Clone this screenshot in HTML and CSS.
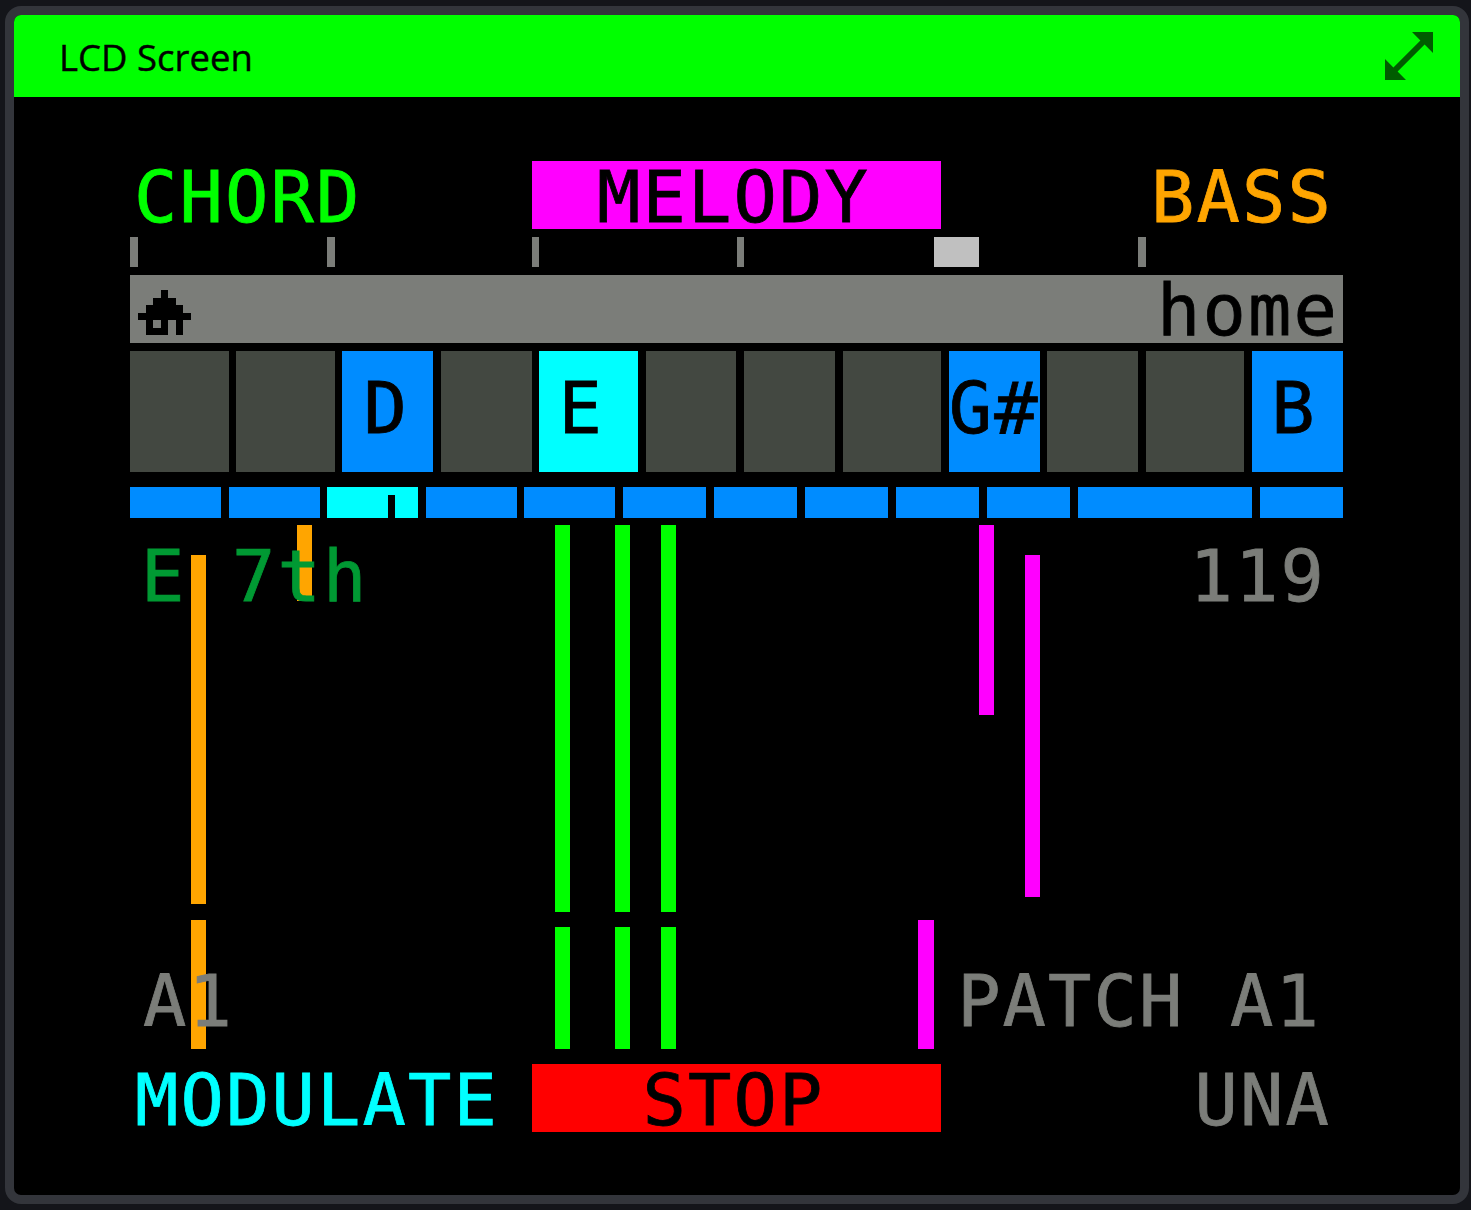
FILE: index.html
```html
<!DOCTYPE html>
<html lang="en">
  <head>
    <meta charset="UTF-8" />
    <meta name="viewport" content="width=device-width, initial-scale=1.0" />
    <title>LCD Screen</title>
    <link rel="stylesheet" href="styles.css">
  </head>
  <body>
    <div class="window">
      <div class="title-bar">
        <span class="title">LCD Screen</span>
        <svg class="expand" viewBox="0 0 48 48" width="48" height="48">
          <path d="M27 0 H48 V21 L39.6 12.6 L12.6 39.6 L21 48 H0 V27 L8.4 35.4 L35.4 8.4 z"></path>
        </svg>
      </div>
      <div class="screen">
        <div class="lcd">
          <div class="mode-row">
            <span class="lcd-text chord">CHORD</span>
            <span class="lcd-text mode-box melody">MELODY</span>
            <span class="lcd-text bass">BASS</span>
          </div>
          <div class="ruler">
            <i class="tick t1"></i>
            <i class="tick t2"></i>
            <i class="tick t3"></i>
            <i class="tick t4"></i>
            <i class="thumb"></i>
            <i class="tick t5"></i>
          </div>
          <div class="status">
            <svg class="home-icon" viewBox="0 0 7 6" shape-rendering="crispEdges">
              <path d="M3 0h1v1h-1z M2 1h3v1h-3z M1 2h5v1h-5z M0 3h7v1h-7z M1 4h1v1h-1z M3 4h1v1h-1z M5 4h1v2h-1z M1 5h3v1h-3z"></path>
            </svg>
            <span class="lcd-text home-label">home</span>
          </div>
          <div class="keys">
            <div class="key wide"></div>
            <div class="key wide"></div>
            <div class="key on note-d lcd-text">D</div>
            <div class="key"></div>
            <div class="key wide root lcd-text">E</div>
            <div class="key"></div>
            <div class="key"></div>
            <div class="key wide"></div>
            <div class="key on sharp lcd-text">G#</div>
            <div class="key"></div>
            <div class="key wide"></div>
            <div class="key on lcd-text">B</div>
          </div>
          <div class="segments">
            <div class="seg"></div>
            <div class="seg"></div>
            <div class="seg current"><i class="notch"></i></div>
            <div class="seg"></div>
            <div class="seg"></div>
            <div class="seg short"></div>
            <div class="seg short"></div>
            <div class="seg short"></div>
            <div class="seg short"></div>
            <div class="seg short"></div>
            <div class="seg long"></div>
            <div class="seg short"></div>
          </div>
          <div class="stage">
            <i class="note bass-note n1"></i>
            <i class="note bass-note n2"></i>
            <i class="note bass-note n3"></i>
            <i class="note chord-note n4"></i>
            <i class="note chord-note n5"></i>
            <i class="note chord-note n6"></i>
            <i class="note chord-note n7"></i>
            <i class="note chord-note n8"></i>
            <i class="note chord-note n9"></i>
            <i class="note melody-note n10"></i>
            <i class="note melody-note n11"></i>
            <i class="note melody-note n12"></i>
            <div class="stage-row">
              <span class="lcd-text chord-name">E 7th</span>
              <span class="lcd-text info tempo">119</span>
            </div>
            <div class="stage-row">
              <span class="lcd-text info bank">A1</span>
              <span class="lcd-text info patch">PATCH A1</span>
            </div>
          </div>
          <div class="mode-row">
            <span class="lcd-text modulate">MODULATE</span>
            <span class="lcd-text mode-box stop">STOP</span>
            <span class="lcd-text info una">UNA</span>
          </div>
        </div>
      </div>
    </div>
  </body>
</html>
```

FILE: styles.css
```css
:root {
  --u: 7.582px;
  --gray: #7b7d79;
  --blue: #008cff;
}
* {
  box-sizing: border-box;
}
html,
body {
  margin: 0;
  height: 100%;
  background-color: #14151a;
}
body {
  padding: 6px 2px 6px 5px;
}
.window {
  height: 100%;
  display: flex;
  flex-direction: column;
  border: 9px solid #33353b;
  border-radius: 16px;
  background-color: #000;
  overflow: hidden;
}
.title-bar {
  height: 82px;
  flex: none;
  display: flex;
  align-items: center;
  justify-content: space-between;
  padding: 0 27px 0 45px;
  background-color: #00ff00;
}
.title {
  padding-top: 2px;
  font-family: "Open Sans", "Noto Sans", sans-serif;
  font-size: 36.5px;
  color: #000;
  -webkit-text-stroke: 0.4px currentColor;
}
.expand {
  fill: #005c00;
}
.screen {
  flex: 1;
  padding: 64.2px 0 0 116px;
}
.lcd {
  width: calc(var(--u) * 160);
  height: calc(var(--u) * 128 + 0.2px);
  display: flex;
  flex-direction: column;
}
.lcd-text {
  font-family: "DejaVu Sans Mono", "Liberation Mono", monospace;
  font-size: 72px;
  line-height: 1;
  letter-spacing: 2.15px;
  -webkit-text-stroke: 0.8px currentColor;
  white-space: pre;
}
.mode-row {
  height: calc(var(--u) * 9);
  flex: none;
  display: grid;
  grid-template-columns: calc(var(--u) * 53) calc(var(--u) * 54) calc(var(--u) * 53);
  grid-template-rows: calc(var(--u) * 9);
  align-items: center;
}
.mode-row .lcd-text {
  padding-top: 4px;
}
.chord {
  color: #00ff00;
  padding-left: 4px;
}
.bass {
  color: #ffa500;
  text-align: right;
  padding-right: 10px;
}
.mode-box {
  height: 100%;
  display: flex;
  align-items: center;
  justify-content: center;
  color: #000;
  padding-right: 6px;
}
.melody {
  background-color: #ff00ff;
}
.stop {
  background-color: #ff0000;
}
.modulate {
  color: #00ffff;
  padding-left: 5px;
}
.info {
  color: var(--gray);
}
.una {
  text-align: right;
  padding-right: 12px;
}
.ruler {
  height: calc(var(--u) * 4);
  flex: none;
  margin-top: var(--u);
  display: grid;
  grid-template-columns: repeat(160, 1fr);
}
.tick {
  background-color: var(--gray);
}
.t1 {
  grid-column: 1;
}
.t2 {
  grid-column: 27;
}
.t3 {
  grid-column: 54;
}
.t4 {
  grid-column: 81;
}
.t5 {
  grid-column: 134;
}
.thumb {
  grid-column: 107 / span 6;
  background-color: #c0c0c0;
}
.status {
  height: calc(var(--u) * 9);
  flex: none;
  margin-top: var(--u);
  display: flex;
  align-items: flex-end;
  justify-content: space-between;
  background-color: var(--gray);
}
.home-icon {
  width: calc(var(--u) * 7);
  height: calc(var(--u) * 6);
  margin: 0 0 var(--u) var(--u);
  fill: #000;
}
.home-label {
  color: #000;
  margin: 0 4px -3px 0;
}
.keys {
  height: calc(var(--u) * 16);
  flex: none;
  margin-top: var(--u);
  display: flex;
  gap: var(--u);
}
.key {
  width: calc(var(--u) * 12);
  flex: none;
  display: flex;
  align-items: center;
  justify-content: center;
  padding: 0 7px 7px 0;
  background-color: #434841;
  color: #000;
}
.key.sharp {
  padding-right: 0;
}
.key.note-d {
  padding-right: 3px;
}
.key.wide {
  width: calc(var(--u) * 13);
}
.key.on {
  background-color: var(--blue);
}
.key.root {
  padding-right: 15px;
  background-color: #00ffff;
}
.segments {
  height: calc(var(--u) * 4 + 0.3px);
  flex: none;
  margin-top: calc(var(--u) * 2);
  display: flex;
  gap: var(--u);
}
.seg {
  width: calc(var(--u) * 12);
  flex: none;
  background-color: var(--blue);
}
.seg.short {
  width: calc(var(--u) * 11);
}
.seg.long {
  width: calc(var(--u) * 23);
}
.seg.current {
  display: flex;
  align-items: flex-end;
  background-color: #00ffff;
}
.notch {
  width: var(--u);
  height: calc(var(--u) * 3);
  margin-left: calc(var(--u) * 8);
  background-color: #000;
}
.stage {
  position: relative;
  flex: 1;
  margin-top: var(--u);
  padding-bottom: calc(var(--u) * 2);
  display: flex;
  flex-direction: column;
  justify-content: space-between;
}
.stage-row {
  position: relative;
  display: flex;
  justify-content: space-between;
  padding: 15px 0 0 11px;
}
.stage-row + .stage-row {
  padding: 0 0 11.5px 13px;
}
.chord-name {
  color: #009933;
}
.tempo {
  margin-right: 17px;
}
.patch {
  margin-right: 22px;
}
/* notes sit on the canvas, x and y measured from the stage corner */
.note {
  position: absolute;
  width: calc(var(--u) * 2);
}
.bass-note {
  background-color: #ffa500;
}
.chord-note {
  background-color: #00ff00;
}
.melody-note {
  background-color: #ff00ff;
}
.n1 {
  left: 167px;
  top: 0;
  height: 76px;
}
.n2 {
  left: 61px;
  top: 30px;
  height: 349px;
}
.n3 {
  left: 61px;
  top: 395px;
  height: 129px;
}
.n4 {
  left: 425px;
  top: 0;
  height: 387px;
}
.n5 {
  left: 485px;
  top: 0;
  height: 387px;
}
.n6 {
  left: 531px;
  top: 0;
  height: 387px;
}
.n7 {
  left: 425px;
  top: 402px;
  height: 122px;
}
.n8 {
  left: 485px;
  top: 402px;
  height: 122px;
}
.n9 {
  left: 531px;
  top: 402px;
  height: 122px;
}
.n10 {
  left: 849px;
  top: 0;
  height: 190px;
}
.n11 {
  left: 895px;
  top: 30px;
  height: 342px;
}
.n12 {
  left: 788.4px;
  top: 395px;
  height: 129px;
}
```
